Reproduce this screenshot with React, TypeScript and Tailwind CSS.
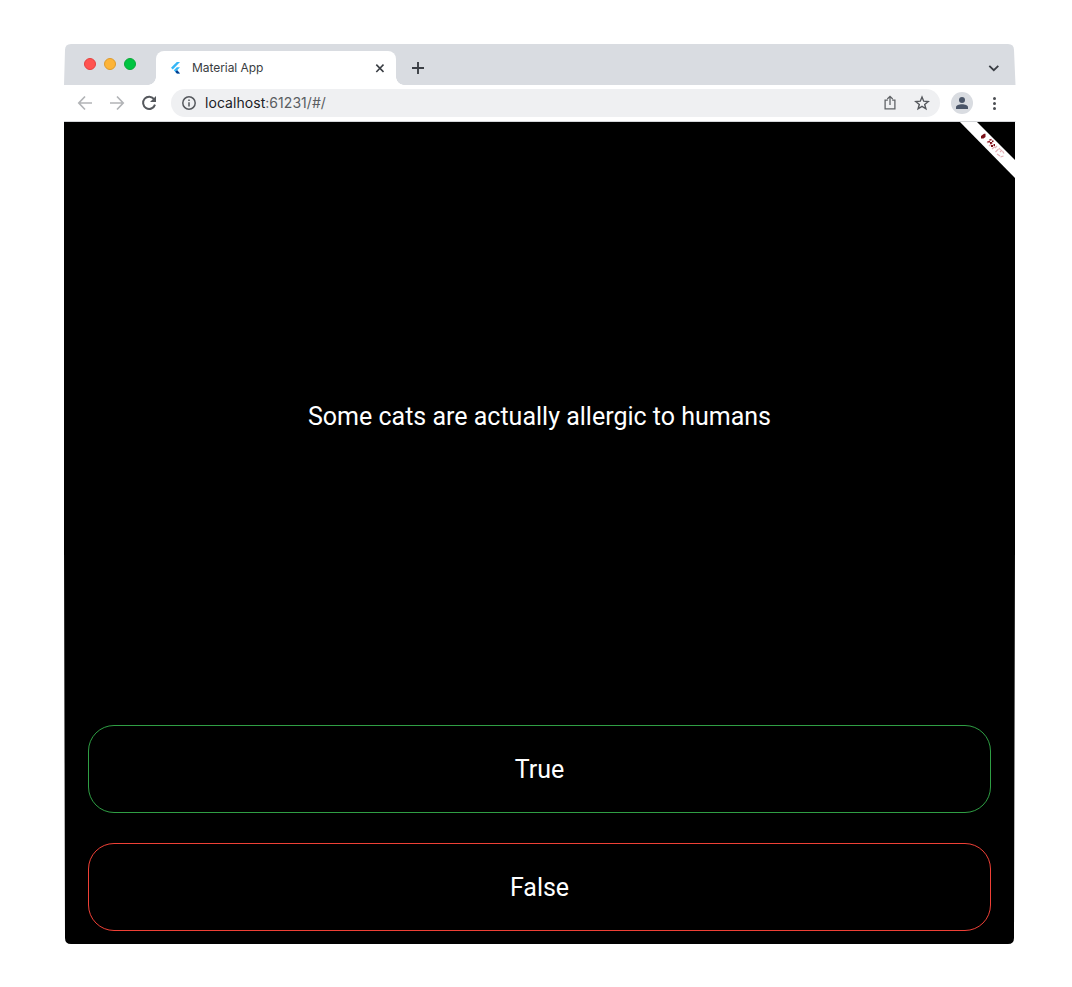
function TrafficLights() {
  return (
    <div className="flex gap-2 pt-3.5 pl-5">
      <span className="size-3 rounded-full border border-[#e4403f] bg-[#ff5350]" />
      <span className="size-3 rounded-full border border-[#dd9a2b] bg-[#fdb438]" />
      <span className="size-3 rounded-full border border-[#0aa838] bg-[#00c441]" />
    </div>
  );
}

function FlutterLogo() {
  return (
    <svg className="ml-[15px] h-3 w-[9px]" viewBox="0 0 9 12">
      <path d="M5.8 0h3.2L1.8 7.4 0 5.8z" fill="#35b6f6" />
      <path d="M5.8 5.2h3.2L6.2 8.2 9 11.6H5.9L2.8 8.2z" fill="#35b6f6" />
      <path d="M4.3 9.8 6.2 8.2 9 11.6H5.9z" fill="#053a8c" />
    </svg>
  );
}

function TabStrip() {
  return (
    <div className="flex h-[41px] shrink-0 bg-[#d9dce1]">
      <TrafficLights />
      <div className="relative mt-[7px] ml-5 flex h-[34px] w-60 items-center rounded-t-lg bg-white">
        <span className="absolute bottom-0 -left-2 size-2 bg-[radial-gradient(circle_at_0_0,#d9dce1_7.5px,#fff_8px)]" />
        <span className="absolute -right-2 bottom-0 size-2 bg-[radial-gradient(circle_at_100%_0,#d9dce1_7.5px,#fff_8px)]" />
        <FlutterLogo />
        <span className="ml-3 w-[183px] text-[12px] leading-4 tracking-[-0.06px] text-[#3a3d41]">Material App</span>
        <svg className="size-[9px]" viewBox="0 0 9 9" stroke="#3b3f45" strokeWidth="1.6">
          <path d="M1.3 .6l7.2 7.4M8.5.6L1.3 8" />
        </svg>
      </div>
      <svg className="mt-[18px] ml-4 size-3" viewBox="0 0 12 12" stroke="#3b3f45" strokeWidth="1.9">
        <path d="M6 0v12M0 6h12" />
      </svg>
      <svg className="mt-[21px] mr-[17px] ml-auto h-[7px] w-[11px]" viewBox="0 0 11 7" fill="none" stroke="#3b3f45" strokeWidth="1.8">
        <path d="M1.3 .8l4.5 4.4L10.3 .8" />
      </svg>
    </div>
  );
}

function Toolbar() {
  return (
    <div className="flex h-[37px] shrink-0 items-center border-b border-[#d4d6d9] bg-white pl-[13px]">
      <svg className="size-4" viewBox="0 0 16 16" fill="none" stroke="#b2b4b7" strokeWidth="1.7">
        <path d="M15 8H2M8 1.5L1.8 8 8 14.5" />
      </svg>
      <svg className="ml-4 size-4" viewBox="0 0 16 16" fill="none" stroke="#b2b4b7" strokeWidth="1.7">
        <path d="M1 8h13M8 1.5L14.2 8 8 14.5" />
      </svg>
      <svg className="ml-4 size-4" viewBox="0 0 16 16" fill="none" stroke="#55585d" strokeWidth="2">
        <path d="M13.2 4.3A6.1 6.1 0 1 0 14 9.6" />
        <path d="M15 1v6H9z" fill="#55585d" stroke="none" />
      </svg>
      <div className="ml-3.5 flex h-7 w-[769px] items-center rounded-full bg-[#eff0f2] pr-2.5 pl-[11px]">
        <svg className="size-3.5" viewBox="0 0 14 14" fill="none" stroke="#55585d" strokeWidth="1.5">
          <circle cx="7" cy="7" r="6.2" />
          <path d="M7 6.2v4.3M7 3.4v1.6" />
        </svg>
        <span className="ml-[9px] text-[14px] leading-5 tracking-[0.05px] text-[#5a5d61]">
          <span className="text-[#202124]">localhost</span>:61231/#/
        </span>
        <svg className="ml-auto size-4" viewBox="0 0 16 16" fill="none" stroke="#606367" strokeWidth="1.3">
          <path d="M5.8 5.2H3.1v8.6h9.8V5.2h-2.7M8 10V1.5M5.3 4L8 1.4 10.7 4" />
        </svg>
        <svg className="ml-4 size-4" viewBox="0 0 16 16" fill="none" stroke="#55585d" strokeWidth="1.4">
          <path d="M8 2l1.7 4.2 4.5.3-3.5 2.9 1.2 4.4L8 11.4l-3.9 2.4 1.2-4.4-3.5-2.9 4.5-.3z" />
        </svg>
      </div>
      <div className="ml-[11px] flex size-[22px] items-center justify-center rounded-full bg-[#d9dce1]">
        <svg className="size-3" viewBox="0 0 12 12" fill="#4a5568">
          <circle cx="6" cy="3" r="3" />
          <path d="M0 12v-1.8C0 8.2 3 7.2 6 7.2s6 1 6 3V12z" />
        </svg>
      </div>
      <svg className="ml-5 h-[13px] w-[3px]" viewBox="0 0 3 13" fill="#4b4e53">
        <circle cx="1.5" cy="1.5" r="1.5" />
        <circle cx="1.5" cy="6.5" r="1.5" />
        <circle cx="1.5" cy="11.5" r="1.5" />
      </svg>
    </div>
  );
}

function DebugRibbon() {
  return (
    <svg className="absolute top-0 right-0 size-14" viewBox="0 0 56 56">
      <path d="M0 -1L17 -1L56 38V56z" fill="#fff" />
      <g fill="#7a1018">
        <path d="M22 14l3-2.2h1.5v3.2l-2 1.5H22z" />
        <path d="M28.5 19h2.5v1.5h-2.5zM30.5 17h2v1.5h-2zM31 20h2v2h-2zM33 18.5h1.5v1.5H33zM32 23h2v2h-2zM34.5 22h1.5v2h-1.5z" />
      </g>
      <g fill="none" stroke="#c9606e" strokeWidth="1.1" opacity=".5">
        <path d="M28 21l4.5-4M30 24l4-3.5M33 27l3-2.5M36 26l2-2M36.5 30l3-3M40 26l1.5 2M38 32l3 2M41 30l2-2M43.5 29l1.5 2.5M41.5 35l3-1" />
      </g>
    </svg>
  );
}

export default function App() {
  return (
    <div className="h-[987px] w-[1072px] bg-white pt-11 pl-16 font-['Inter',sans-serif]">
      <div className="flex h-[900px] w-[952px] flex-col bg-white [clip-path:path('M1_6Q1_0_7_0H944Q950_0_950_6L951.5_41V78L951_500L950_894Q950_900_944_900H7Q1_900_1_894L0_500V41Z')]">
        <TabStrip />
        <Toolbar />
        <main className="relative flex w-[951px] flex-1 flex-col bg-black px-6 pb-[13px] font-['Roboto',sans-serif] text-[25px] text-white">
          <DebugRibbon />
          <div className="flex h-[589px] shrink-0 items-center justify-center">
            <p>Some cats are actually allergic to humans</p>
          </div>
          <button className="mt-[14px] h-[88px] w-[903px] shrink-0 rounded-[26px] border border-[#2f9e44] pt-0.5">True</button>
          <button className="mt-[30px] h-[88px] w-[903px] shrink-0 rounded-[26px] border border-[#ef4036] pt-0.5">False</button>
        </main>
      </div>
    </div>
  );
}
